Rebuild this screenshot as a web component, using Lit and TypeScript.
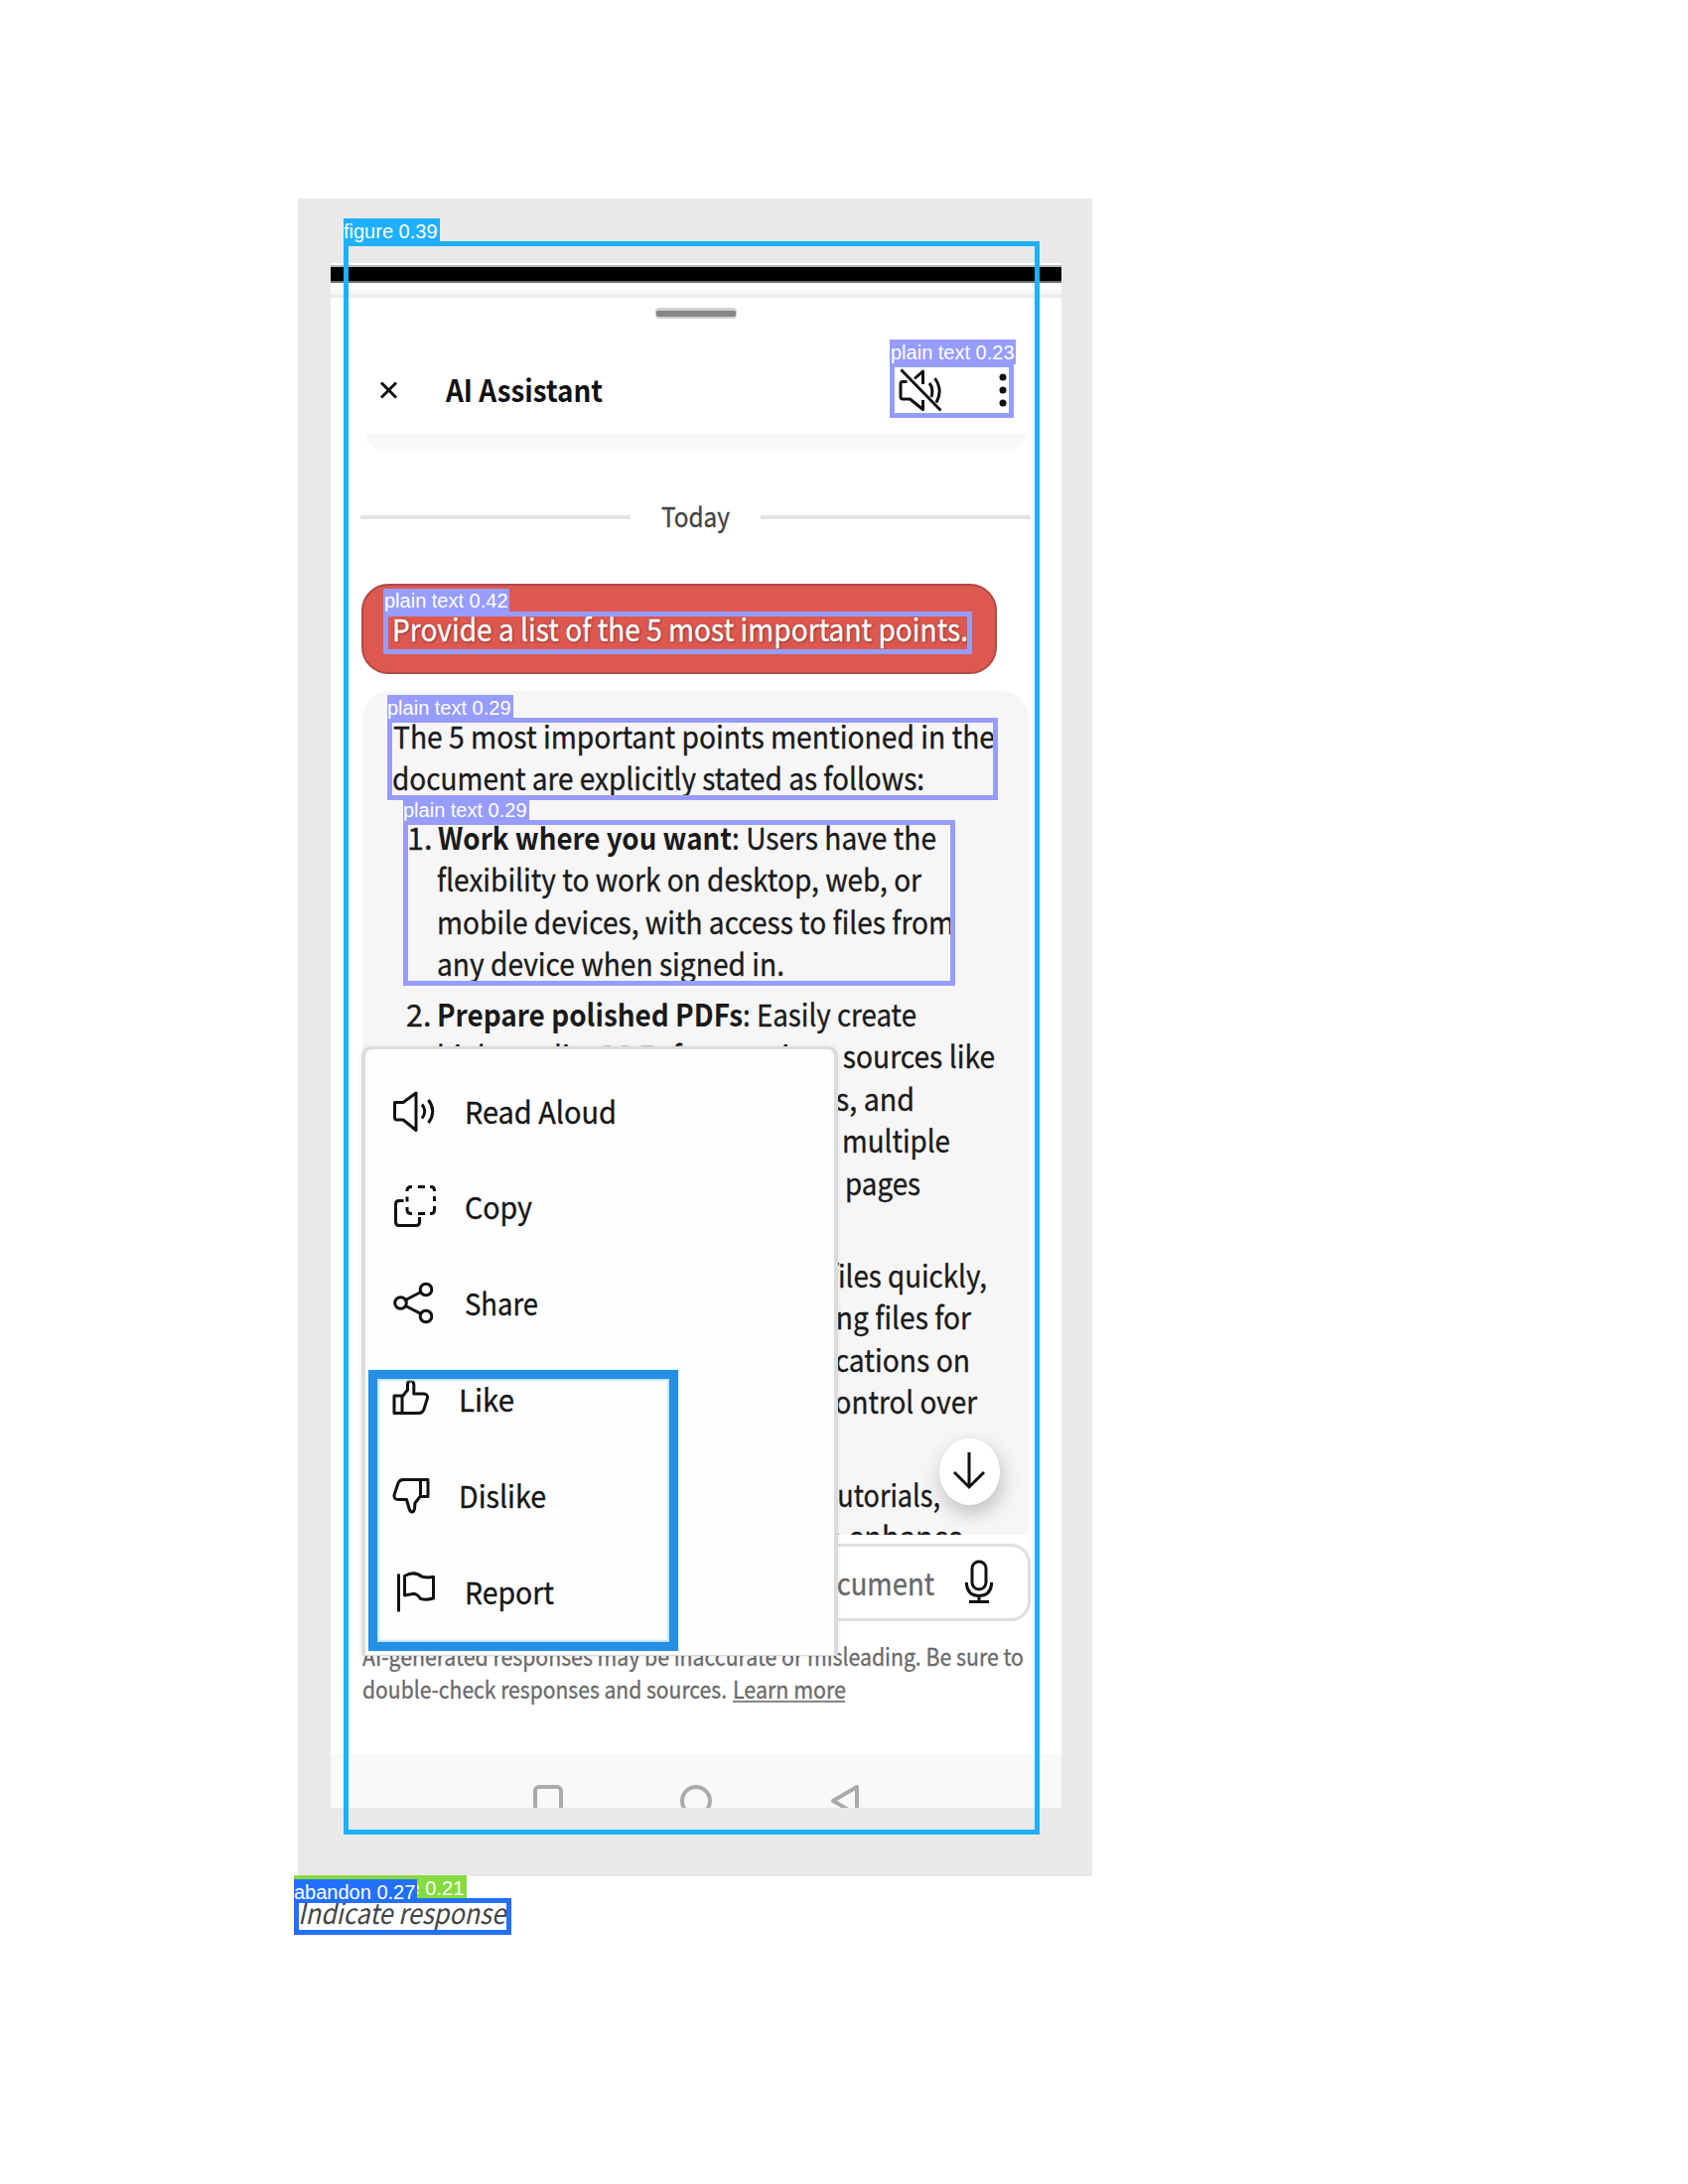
import { LitElement, html, css, svg, nothing } from "lit";
import { customElement, property } from "lit/decorators.js";

/** A single line of text stretched to an exact advance width. */
@customElement("fit-text")
class FitText extends LitElement {
  @property({ type: Number }) width = 0;

  static styles = css`
    :host { display: block; white-space: pre; flex: none; }
    .run { display: inline-block; transform-origin: 0 50%; }
  `;

  render() {
    return html`<span class="run"><slot></slot></span>`;
  }

  updated() {
    const run = this.renderRoot.querySelector(".run") as HTMLElement;
    run.style.transform = "none";
    const natural = run.getBoundingClientRect().width;
    if (natural > 0 && this.width > 0) {
      run.style.transform = `scaleX(${this.width / natural})`;
    }
  }
}

interface Line { x: number; w: number; text: string; bold?: string; bw?: number; num?: string; }

/* x is measured from the left edge of the answer card */
const intro: Line[] = [
  { x: 31, w: 606, text: "The 5 most important points mentioned in the" },
  { x: 30, w: 536, text: "document are explicitly stated as follows:" },
];

const points: Line[][] = [
  [
    { x: 76, num: "1.", bold: "Work where you want", bw: 296, text: ": Users have the", w: 206 },
    { x: 75, w: 488, text: "flexibility to work on desktop, web, or" },
    { x: 75, w: 521, text: "mobile devices, with access to files from" },
    { x: 75, w: 350, text: "any device when signed in." },
  ],
  [
    { x: 75, num: "2.", bold: "Prepare polished PDFs", bw: 308, text: ": Easily create", w: 175 },
    { x: 75, w: 562, text: "high-quality PDFs from various sources like" },
    { x: 461, w: 95, text: "es, and" },
    { x: 483, w: 109, text: "multiple" },
    { x: 486, w: 76, text: "pages" },
  ],
  [
    { x: 76, w: 0, text: "" },
    { x: 470, w: 159, text: "files quickly," },
    { x: 469, w: 144, text: "ing files for" },
    { x: 468, w: 144, text: "ications on" },
    { x: 462, w: 157, text: "control over" },
  ],
  [
    { x: 76, w: 0, text: "" },
    { x: 468, w: 114, text: "tutorials," },
    { x: 465, w: 140, text: "o enhance" },
  ],
];

const icons: Record<string, unknown> = {
  speaker: svg`<path d="M3.5 15.5H12L25 6V43.500L12 33H6a2.500 2.500 0 0 1-2.500-2.500Z"/><path d="M31 17.500q5.500 7 0 14M37.500 13q8.500 11.500 0 23"/>`,
  copy: svg`<path d="M12.500 17.500H8q-3.500 0-3.500 3.500V39q0 3.500 3.500 3.500H25q3.500 0 3.500-3.500V34"/><path d="M16 8V7.500q0-4 4-4H21M27 3.500h7M39 3.500h1.500q3 0 3 4V8M43.500 13v5M43.500 23v4q0 3.500-3.500 3.500h-1M34 30.500h-7M21 30.500h-1q-4 0-4-4V24M16 18.500v-5"/>`,
  share: svg`<circle cx="9.500" cy="24.500" r="5.800"/><circle cx="35" cy="11" r="5.800"/><circle cx="35" cy="38" r="5.800"/><path d="M14.500 21.500 29.800 13.500M14.500 27.500 29.800 35.300"/>`,
  like: svg`<path d="M3 21h8v17.500H3ZM11 22l5.500-7V9.500q0-3.500 3-3.500t3.300 3.500V19H32q5 0 4.500 4L33 34.500q-1.500 4-5 4H11"/>`,
  dislike: svg`<path d="M29.500 8.500h7.500v17h-7.500ZM29.500 8.500H12Q8.500 8.500 7 12L3 24q-.500 4.500 4 4.500H15.500l2.500 9q1 3.500 3 3.500t2.500-3.500L24 32l5.500-7"/>`,
  report: svg`<path d="M7.500 6.500V44.500"/><path d="M13.500 8.500q10-5.500 17 .500 5 1.500 12 .500V31q-7 2-13 .500-4-6.500-10-4.500-3.500.500-6 1Z"/>`,
};

const menu = [
  { icon: "speaker", label: "Read Aloud", w: 153, tight: false },
  { icon: "copy", label: "Copy", w: 68, tight: false },
  { icon: "share", label: "Share", w: 74, tight: false },
  { icon: "like", label: "Like", w: 56, tight: true },
  { icon: "dislike", label: "Dislike", w: 88, tight: true },
  { icon: "report", label: "Report", w: 90, tight: false },
];

@customElement("app-root")
class AppRoot extends LitElement {
  static styles = css`
    :host {
      display: block; position: relative; width: 1700px; height: 2200px; overflow: hidden;
      background: #fff; color: #1a1a1a;
      font: 400 30.5px/42.5px "Noto Sans CJK SC", "Noto Sans", sans-serif;
    }
    *, *::before { box-sizing: border-box; }
    .page { padding: 200px 0 0 300px; }
    .figure { width: 800px; height: 1690px; background: #e9e9e9; padding: 65px 31px 0 33px; }
    .phone { position: relative; width: 736px; height: 1556px; background: #fff; overflow: hidden; -webkit-text-stroke: 0.35px currentColor; }
    svg { display: block; flex: none; fill: none; stroke: #111; stroke-width: 3; stroke-linejoin: round; }

    .status {
      height: 35px;
      background: linear-gradient(#fff 2px, #b8b8b8 2px 4px, #000 4px 18px, #6e6e6e 18px 20px, #fff 20px 27px, #f7f7f7 27px 31px, #ececec 31px);
    }
    .grip { width: 82px; height: 11px; margin: 10px 0 0 327px; border: solid #cfcfcf; border-width: 3px 1px 2px; border-radius: 4px; background: #868686; }
    .header { display: flex; align-items: center; height: 116px; padding: 27px 55px 0 49px; }
    .title { margin-left: 48px; font-weight: 700; color: #111; -webkit-text-stroke: 0; }
    .mute { margin-left: auto; }
    .dots { margin-left: 57px; fill: #111; stroke: none; }
    .shade { height: 17px; margin: 0 36px 0 35px; border-radius: 0 0 30px 30px; background: linear-gradient(#f7f7f7, #fbfbfb); }
    .day { display: flex; align-items: center; justify-content: space-between; height: 134px; padding: 0 31px 0 30px; font-size: 27.5px; color: #444; }
    .rule { width: 272px; height: 4px; background: #e3e3e3; }
    .day fit-text { padding-bottom: 3px; width: 70px; }

    .bubble {
      display: flex; align-items: center; width: 640px; height: 91px; margin-left: 31px; padding: 0 0 0 29px;
      border: 2px solid #b04a45; border-radius: 27px; background: #dd584f; color: #fff;
      text-shadow: 1px 1px 2px #8d2f2c, 0 0 3px #a53d38;
    }
    .answer { width: 671px; height: 850px; margin: 17px 0 0 32px; padding-top: 23.5px; border-radius: 28px 28px 0 0; background: #f7f6f7; overflow: hidden; }
    .line { display: flex; height: 42.5px; }
    .intro { padding-bottom: 17px; }
    .point { padding-bottom: 8.2px; }
    .num { width: 31px; margin-left: -31px; }
    .bold { font-weight: 700; -webkit-text-stroke: 0; }

    .composer { display: flex; align-items: center; width: 674px; height: 78px; margin: 9px 0 0 31px; padding-left: 442px; border: 3px solid #e0dfe0; border-radius: 20px; color: #686868; }
    .ask { width: 136px; }
    .mic { margin-left: 27px; margin-bottom: 2px; }
    .notice { height: 134px; padding: 19px 0 0 32px; font-size: 24.2px; line-height: 32.5px; color: #6b6b6b; }
    .sources { display: flex; }
    .src { width: 373px; }
    .learn { height: 30px; width: 113px; border-bottom: 2px solid #858585; }
    .nav { display: flex; gap: 117px; height: 56px; padding: 30px 0 0 203px; background: #f9f9f9; }
    .nav svg { stroke: #aaa; stroke-width: 4; }

    .down {
      position: absolute; left: 613px; top: 1184px; width: 61px; height: 67px; padding: 13px 0 0 13px; border-radius: 50%;
      background: #fff; box-shadow: 2px 8px 18px 2px rgba(0,0,0,.2);
    }
    .menu {
      position: absolute; left: 31px; top: 789px; width: 480px; height: 614px; padding: 13.5px 0 0 26px;
      background: #fefefe; border: solid #dcdbdc; border-width: 3px 4px 1px; border-radius: 10px 10px 2px 2px;
      box-shadow: 0 1px 4px rgba(0,0,0,.1);
    }
    .entry { display: flex; align-items: center; gap: 26px; height: 96.8px; color: #161616; }
    .tight { gap: 20px; }
    .ring { position: absolute; left: 38px; top: 1115px; width: 312px; height: 283px; border: 9px solid #258fe6; box-shadow: inset 0 0 2px 2px #bfe6fb, 0 0 3px #c9ecff; }

    .caption { padding-top: 14px; font-size: 28.5px; line-height: 44px; font-style: italic; color: #444; }

    .box { position: absolute; border: 5px solid; }
    .tag { position: absolute; height: 25px; font: 20px/26px "Liberation Sans", Arial, sans-serif; color: #fff; white-space: pre; overflow: hidden; }
    .c-figure { border-color: #1eb0ff; }
    .c-text { border-color: #979cff; }
    .c-abandon { border-color: #2370ff; }
    .t-figure { background: #1eb0ff; }
    .t-text { background: #979cff; }
    .b0 { left: 346px; top: 243px; width: 701px; height: 1605px; }
    .b1 { left: 896px; top: 365px; width: 125px; height: 56px; }
    .b2 { left: 386px; top: 616px; width: 593px; height: 43px; }
    .b3 { left: 390px; top: 723px; width: 615px; height: 83px; }
    .b4 { left: 406px; top: 826px; width: 556px; height: 167px; }
    .b5 { left: 296px; top: 1912px; width: 219px; height: 37px; }
    .g0 { left: 346px; top: 220px; width: 97px; }
    .g1 { left: 896px; top: 342px; width: 127px; padding-left: 1px; }
    .g2 { left: 386px; top: 593px; width: 127px; padding-left: 1px; line-height: 25px; }
    .g3 { left: 390px; top: 700px; width: 127px; }
    .g4 { left: 406px; top: 803px; width: 127px; }
    .g5 { left: 296px; top: 1889px; width: 174px; height: 23px; background: #86db3e; }
    .g6 { left: 296px; top: 1893px; width: 124px; height: 20px; background: #2370ff; }
  `;

  line(l: Line) {
    return html`<div class="line" style="padding-left:${l.x}px">
      ${l.num ? html`<span class="num">${l.num}</span>` : nothing}
      ${l.bold ? html`<fit-text class="bold" style="width:${l.bw}px" width=${l.bw}>${l.bold}</fit-text>` : nothing}
      ${l.text ? html`<fit-text width=${l.w}>${l.text}</fit-text>` : nothing}
    </div>`;
  }

  render() {
    return html`
      <div class="page">
        <div class="figure">
          <div class="phone">
            <div class="status"></div>
            <div class="grip"></div>
            <div class="header">
              <svg width="19" height="20" viewBox="0 0 19 20"><path d="M2 2.500 17 17.500M17 2.500 2 17.500"/></svg>
              <fit-text class="title" width="158">AI Assistant</fit-text>
              <svg class="mute" width="44" height="46" viewBox="0 0 44 46">
                <path d="M2.500 2.500 42.500 43.500M8.500 14.500H3.800Q2 14.500 2 17V29.500Q2 32 4.500 32H11.500L24.500 42.500V33M16 11.500 24.500 4V17M31 16q4.500 5 2 14M36.500 11q8.500 12 1.500 24.500"/>
              </svg>
              <svg class="dots" width="8" height="36" viewBox="0 0 8 36"><circle cx="4" cy="5" r="3.500"/><circle cx="4" cy="18" r="3.500"/><circle cx="4" cy="31" r="3.500"/></svg>
            </div>
            <div class="shade"></div>
            <div class="day"><span class="rule"></span><fit-text width="69">Today</fit-text><span class="rule"></span></div>
            <div class="bubble"><fit-text width="580">Provide a list of the 5 most important points.</fit-text></div>
            <div class="answer">
              <div class="intro">${intro.map((l) => this.line(l))}</div>
              ${points.map((p) => html`<div class="point">${p.map((l) => this.line(l))}</div>`)}
            </div>
            <div class="composer">
              <fit-text class="ask" width="132">document</fit-text>
              <svg class="mic" width="28" height="46" viewBox="0 0 28 46"><rect x="7" y="3" width="14" height="28" rx="7"/><path d="M1.500 24v2.500q1.500 11 12.500 11t12.500-11V24M14 37.500V43.500M4 43.500H24"/></svg>
            </div>
            <div class="notice">
              <fit-text width="666">AI-generated responses may be inaccurate or misleading. Be sure to</fit-text>
              <div class="sources">
                <fit-text class="src" width="367">double-check responses and sources.</fit-text>
                <fit-text class="learn" width="114">Learn more</fit-text>
              </div>
            </div>
            <div class="nav">
              <svg width="32" height="34" viewBox="0 0 32 34"><rect x="3" y="3" width="26" height="30" rx="4"/></svg>
              <svg width="32" height="34" viewBox="0 0 32 34"><circle cx="16" cy="17" r="14"/></svg>
              <svg width="32" height="34" viewBox="0 0 32 34"><path d="M29 3V31L5 17Z"/></svg>
            </div>
            <div class="down"><svg width="34" height="40" viewBox="0 0 34 40"><path stroke-linejoin="miter" d="M17 1V36M2 21 17 36 32 21"/></svg></div>
            <div class="menu">
              ${menu.map((m) => html`<div class="entry ${m.tight ? "tight" : ""}">
                <svg width="48" height="48" viewBox="0 0 48 48">${icons[m.icon]}</svg>
                <fit-text width=${m.w}>${m.label}</fit-text>
              </div>`)}
            </div>
            <div class="ring"></div>
          </div>
        </div>
        <div class="caption"><fit-text width="209">Indicate response</fit-text></div>
      </div>
      <div class="box c-figure b0"></div><div class="tag t-figure g0">figure 0.39</div>
      <div class="box c-text b1"></div><div class="tag t-text g1">plain text 0.23</div>
      <div class="box c-text b2"></div><div class="tag t-text g2">plain text 0.42</div>
      <div class="box c-text b4"></div><div class="tag t-text g4">plain text 0.29</div>
      <div class="box c-text b3"></div><div class="tag t-text g3">plain text 0.29</div>
      <div class="tag g5">table_footnote 0.21</div>
      <div class="box c-abandon b5"></div><div class="tag g6">abandon 0.27</div>
    `;
  }
}
